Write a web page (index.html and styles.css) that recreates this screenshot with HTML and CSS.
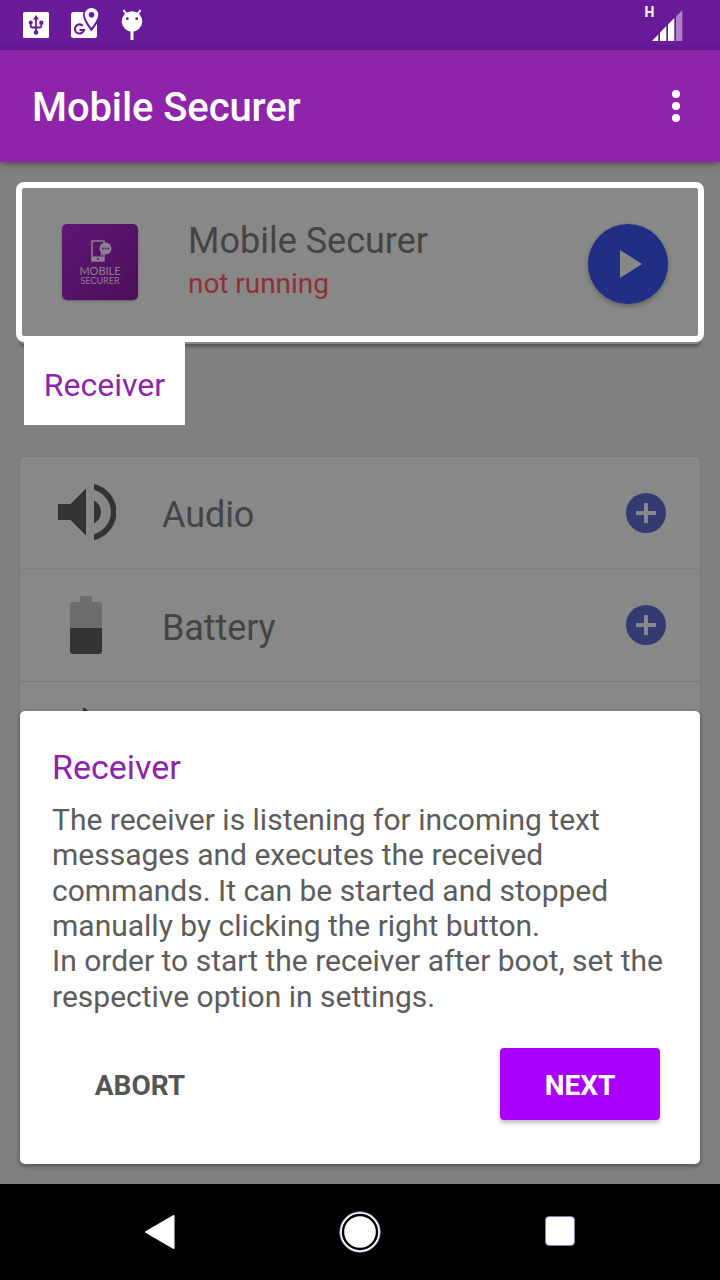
FILE: index.html
```html
<!DOCTYPE html>
<html lang="en">
<head>
<meta charset="utf-8">
<title>Mobile Securer</title>
<link rel="stylesheet" href="styles.css">
</head>
<body>
<div class="screen">
  <div class="status">
    <div class="notifications">
      <svg width="26" height="26" viewBox="0 0 26 26"><rect width="26" height="26" rx="1.5" fill="#fff"/><g stroke="#681a98" stroke-width="1.8" fill="none"><path d="M13 6v15M7.700 11v3q0 1.500 1.500 1.500h7.600q1.500 0 1.500-1.500v-3"/></g><g fill="#681a98"><path d="M10 7.500L13 3l3 4.500z"/><circle cx="7.700" cy="10.500" r="2"/><rect x="16.400" y="8.700" width="3.800" height="3.800"/><circle cx="13" cy="20.500" r="2.300"/></g></svg>
      <svg class="maps" width="28" height="30" viewBox="0 0 28 30"><rect y="4" width="26" height="26" rx="2.500" fill="#fff"/><path d="M20.500 0c-4 0-7 3-7 7 0 5 7 14 7 14s7-9 7-14c0-4-3-7-7-7z" fill="#fff" stroke="#681a98" stroke-width="3"/><path d="M20.500 0c-3.800 0-6.700 3-6.700 6.700 0 4.800 6.700 13 6.700 13s6.700-8.200 6.700-13c0-3.700-2.900-6.700-6.700-6.700z" fill="#fff"/><circle cx="20.500" cy="6.800" r="2.800" fill="#681a98"/><path d="M11.800 17.700A4.600 4.600 0 1 0 13 22H8.500" fill="none" stroke="#681a98" stroke-width="2.100"/></svg>
      <svg class="droid" width="22" height="32" viewBox="0 0 22 32"><g stroke="#fff" stroke-width="2"><path d="M2.500 1.200l3 4M19.500 1.200l-3 4"/><path d="M11 22v9" stroke-width="3"/></g><circle cx="11" cy="12.500" r="10.200" fill="#fff"/><g fill="#681a98"><circle cx="6.300" cy="9.700" r="1.400"/><circle cx="15.700" cy="9.700" r="1.400"/></g></svg>
    </div>
    <div class="signal">
      <span class="network">H</span>
      <svg width="31" height="32" viewBox="0 0 31 32" fill="#fff"><path d="M0 31l6.300-6.500V31zM8 31v-8.200L14.300 16v15zM16 31V14.500L22.300 8v23z"/><path d="M24 31V6.500L30.300 0v31z" opacity=".45"/></svg>
    </div>
  </div>
  <header class="toolbar">
    <h1>Mobile Securer</h1>
    <svg width="8" height="32" viewBox="0 0 8 32" fill="#fff"><circle cx="4" cy="4" r="4"/><circle cx="4" cy="16" r="4"/><circle cx="4" cy="28" r="4"/></svg>
  </header>
  <main class="content">
    <section class="receiver">
      <div class="logo">
        <svg width="22" height="22" viewBox="0 0 22 22"><path d="M1 1h12v20H1z" fill="none" stroke="#8c8090" stroke-width="1.500"/><path d="M1 16.500h12V21H1z" fill="#8c8090"/><circle cx="7" cy="19" r="1" fill="#54115f"/><circle cx="14.500" cy="8.500" r="6" fill="#8c8090"/><path d="M10.500 12l-1 4 4-2z" fill="#8c8090"/><g fill="#54115f"><circle cx="11.700" cy="8.500" r=".9"/><circle cx="14.500" cy="8.500" r=".9"/><circle cx="17.300" cy="8.500" r=".9"/></g></svg>
        <span class="logo-top">MOBILE</span>
        <span class="logo-bottom">SECURER</span>
      </div>
      <div class="receiver-text">
        <div class="receiver-name">Mobile Securer</div>
        <div class="receiver-state">not running</div>
      </div>
      <div class="play"><svg width="22" height="28" viewBox="0 0 22 28"><path d="M0 0l22 14L0 28z" fill="#888"/></svg></div>
      <div class="highlight"></div>
      <div class="tooltip">Receiver</div>
    </section>
    <section class="modules">
      <div class="row">
        <div class="row-icon"><svg width="58" height="56" viewBox="0 0 58 56" fill="#333"><path d="M0 20h12.500L28 4.500v47L12.500 36H0zM36 16.500a13 13 0 0 1 0 23z"/><path d="M36 0a28.700 28.700 0 0 1 0 56v-6a22.800 22.800 0 0 0 0-44z"/></svg></div>
        <span class="row-name">Audio</span>
        <div class="add"></div>
      </div>
      <div class="row">
        <div class="row-icon battery"><svg width="32" height="58" viewBox="0 0 32 58"><path d="M10 0h12v6h7q3 0 3 3v24H0V9q0-3 3-3h7z" fill="#6d6d6d"/><path d="M0 32h32v23q0 3-3 3H3q-3 0-3-3z" fill="#333"/></svg></div>
        <span class="row-name">Battery</span>
        <div class="add"></div>
      </div>
      <div class="row partial"><svg width="7" height="10" viewBox="0 0 7 10"><path d="M0 0h2l5 5v5H0z" fill="#333"/></svg></div>
    </section>
    <section class="dialog">
      <h2>Receiver</h2>
      <p>The receiver is listening for incoming text<br>messages and executes the received<br>commands. It can be started and stopped<br>manually by clicking the right button.<br>In order to start the receiver after boot, set the<br>respective option in settings.</p>
      <div class="actions">
        <button class="abort">ABORT</button>
        <button class="next">NEXT</button>
      </div>
    </section>
  </main>
  <nav class="navbar">
    <svg width="32" height="36" viewBox="0 0 32 36"><path d="M2 18L29.500 2v32z" fill="#fff" stroke="#fff" stroke-width="2" stroke-linejoin="round"/></svg>
    <svg class="home" width="42" height="42" viewBox="0 0 42 42"><circle cx="21" cy="21" r="20.300" fill="#fff" stroke="#7779bd" stroke-width=".8"/><circle cx="21" cy="21" r="17" fill="#fff" stroke="#000" stroke-width="2.400"/></svg>
    <svg class="recents" width="30" height="30" viewBox="0 0 30 30"><rect x=".4" y=".4" width="29.200" height="29.200" rx="4" fill="#fff" stroke="#7779bd" stroke-width=".8"/></svg>
  </nav>
</div>
</body>
</html>
```
FILE: styles.css
```css
* { box-sizing: border-box; }
body { margin: 0; font-family: Roboto, sans-serif; }
h1, h2, p { margin: 0; font-weight: 400; }
.screen { width: 720px; height: 1280px; display: flex; flex-direction: column; overflow: hidden; }

.status { height: 50px; background: #681a98; display: flex; justify-content: space-between; padding: 0 38px 0 23px; }
.notifications { display: flex; align-items: flex-start; padding-top: 12px; }
.notifications .maps { margin: -4px 0 0 22px; }
.notifications .droid { margin: -3px 0 0 22px; }
.signal { display: flex; align-items: flex-start; }
.network { color: #fff; font-size: 14px; font-weight: 700; line-height: 16px; margin-top: 4px; letter-spacing: -.5px; }
.signal svg { margin: 10px 0 0 -2px; }
.signal { margin-right: -1px; }

.toolbar { height: 112px; background: #8e24aa; display: flex; align-items: center; justify-content: space-between; padding: 0 40px 0 32px; position: relative; z-index: 1; box-shadow: 0 2px 7px rgba(0, 0, 0, .4); }
.toolbar h1 { color: #fff; font-size: 40px; font-weight: 500; line-height: 48px; padding-top: 3px; letter-spacing: -.1px; }

.content { height: 1022px; background: #808080; padding: 24px 20px 0; position: relative; overflow: hidden; }
.receiver { height: 158px; background: #888; border-radius: 4px; box-shadow: 0 3px 3px rgba(0, 0, 0, .3); display: flex; align-items: center; padding: 0 32px 0 42px; position: relative; }
.logo { width: 76px; height: 76px; border-radius: 5px; background: linear-gradient(135deg, #601674, #4c0f5a); box-shadow: 0 1px 2px rgba(0, 0, 0, .3); display: flex; flex-direction: column; align-items: center; padding-top: 16px; margin-top: -6px; color: #8c8090; font-family: Lato, sans-serif; }
.logo svg { margin-left: 4px; }
.logo-top { font-size: 11px; line-height: 11px; margin-top: 3px; }
.logo-bottom { font-size: 9px; line-height: 9px; }
.receiver-text { flex: 1; padding: 0 0 7px 50px; }
.receiver-name { font-size: 36px; line-height: 44px; color: #444; }
.receiver-state { font-size: 28px; line-height: 42px; color: #913034; letter-spacing: -.05px; }
.play { width: 80px; height: 80px; margin-top: -2px; border-radius: 50%; background: #202e86; box-shadow: 0 2px 5px rgba(0, 0, 0, .3); display: flex; align-items: center; justify-content: center; padding-left: 5px; }
.highlight { position: absolute; left: -4px; top: -4px; width: 688px; height: 160px; border: 6px solid #fff; border-radius: 8px; }
.tooltip { position: absolute; left: 4px; top: 154px; width: 161px; height: 85px; background: #fff; color: #8e24aa; font-size: 32px; line-height: 88px; text-align: center; padding-top: 1px; }

.modules { margin-top: 113px; background: #888; border-radius: 4px 4px 0 0; box-shadow: 0 0 2px rgba(0, 0, 0, .15); }
.row { height: 112px; display: flex; align-items: center; padding: 0 34px; border-bottom: 1px solid #808080; }
.row + .row { height: 113px; border-color: #777; }
.row-icon { width: 64px; height: 58px; display: flex; justify-content: center; align-items: center; padding: 0 0 1px 2px; }
.row-icon.battery { padding: 0; margin-top: -1px; }
.row-name { flex: 1; padding: 5px 0 0 44px; font-size: 36px; line-height: 44px; color: #444; letter-spacing: -.1px; }
.add { width: 40px; height: 40px; border-radius: 50%; background: linear-gradient(#888, #888) center / 20px 4px no-repeat, linear-gradient(#888, #888) center / 4px 20px no-repeat, #333b70; }
.row + .row.partial { height: 60px; border: 0; align-items: flex-start; padding: 26px 0 0 63px; }

.dialog { position: absolute; left: 20px; top: 549px; width: 680px; height: 453px; background: #fff; border-radius: 5px; box-shadow: 0 2px 5px rgba(0, 0, 0, .4); padding: 35px 40px 0 32px; }
.dialog h2 { color: #8e24aa; font-size: 34px; line-height: 42px; }
.dialog p { color: #5c5c5c; font-size: 30px; line-height: 35.35px; white-space: nowrap; padding-top: 14px; }
.actions { display: flex; justify-content: space-between; margin-top: 34px; }
.actions button { border: 0; height: 72px; font: 700 28px/36px Roboto, sans-serif; padding: 4px 0 0; }
.abort { width: 176px; background: none; color: #555; }
.next { width: 160px; background: #aa00ff; color: #fff; border-radius: 4px; box-shadow: 0 3px 4px rgba(0, 0, 0, .25); }

.navbar { height: 96px; background: #000; display: flex; align-items: center; justify-content: space-between; padding: 0 145px 0 144px; }
.navbar .home { margin-left: -2px; }
.navbar .recents { margin-top: -2px; }
```
